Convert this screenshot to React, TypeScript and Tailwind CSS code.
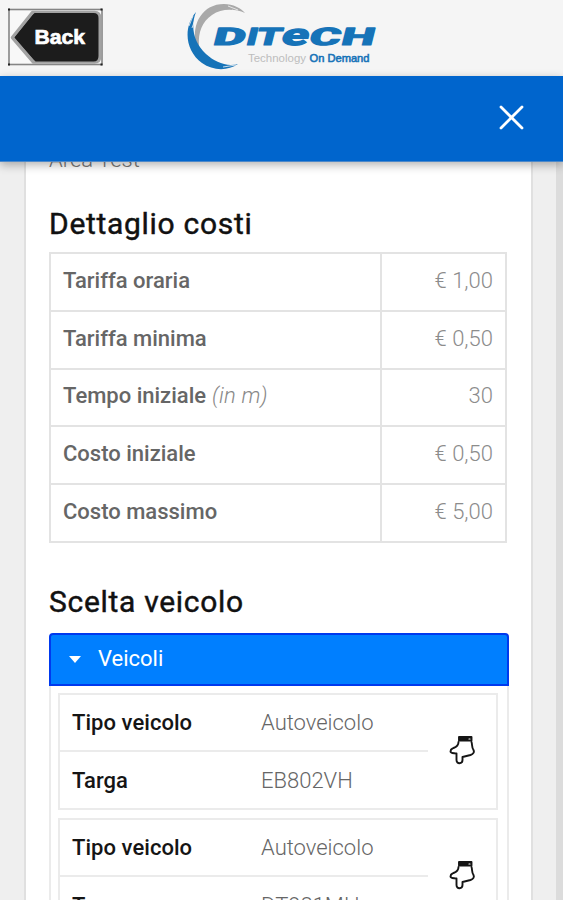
import type { ReactNode } from 'react';

interface Cost {
  label: string;
  note?: string;
  value: string;
}

interface Vehicle {
  type: string;
  plate: string;
}

const costs: Cost[] = [
  { label: 'Tariffa oraria', value: '€ 1,00' },
  { label: 'Tariffa minima', value: '€ 0,50' },
  { label: 'Tempo iniziale', note: '(in m)', value: '30' },
  { label: 'Costo iniziale', value: '€ 0,50' },
  { label: 'Costo massimo', value: '€ 5,00' },
];

const vehicles: Vehicle[] = [
  { type: 'Autoveicolo', plate: 'EB802VH' },
  { type: 'Autoveicolo', plate: 'DT981MH' },
];

// x offset and width of each letter in the wordmark
const wordmark = [
  { letter: 'D', x: 28, width: 32 },
  { letter: 'I', x: 61, width: 11 },
  { letter: 'T', x: 71, width: 25 },
  { letter: 'e', x: 96, width: 27 },
  { letter: 'C', x: 124, width: 31 },
  { letter: 'H', x: 156, width: 33 },
];

function BackButton() {
  return (
    <button aria-label="Back" className="h-[58px] w-[97px]">
      <svg width="97" height="58" viewBox="0 0 96 58">
        <rect x="1.5" y="1.5" width="93" height="55" fill="#f8f8f8" stroke="#858585" strokeWidth="1.6" />
        <path d="M25 4.5H87Q92 4.5 92 9.5V49Q92 54 87 54H26L5 29.5Z" fill="#1c1c1c" stroke="#a2a2a2" strokeWidth="3.5" strokeLinejoin="round" />
        <path d="M27 5H86Q91 5 91 10V48Q91 53.5 86 53.5H28L7 29.5Z" fill="#1c1c1c" />
        <g fill="#222">
          <rect x="0.5" y="0.5" width="2" height="2" />
          <rect x="93" y="0.5" width="2" height="2" />
          <rect x="0.5" y="55.5" width="2" height="2" />
          <rect x="93" y="55.5" width="2" height="2" />
        </g>
        <text x="27" y="36" fill="#fff" stroke="#fff" strokeWidth="0.7" fontFamily="Liberation Sans, sans-serif" fontWeight="700" fontSize="21" textLength="50.5" lengthAdjust="spacingAndGlyphs">
          Back
        </text>
      </svg>
    </button>
  );
}

function Logo() {
  return (
    <svg width="200" height="72" viewBox="0 0 200 72" role="img" aria-label="Ditech">
      <path d="M12 46C7 23 19 4 40 4C49 4 57 8 61 13C51 9 38 8 28 15C18 22 14 32 15 46Z" fill="#a9a9a9" />
      <path d="M12 12C-1 27 1 51 18 63C29 71 44 71 54 64C42 67 31 62 22 54C10 43 6 27 12 12Z" fill="#1673b8" />
      <path d="M9 16L5 26M12 17L8 28M44 6L54 10M48 10L58 13M39 67L52 65" stroke="#f5f5f5" strokeWidth="0.8" />
      <g fill="#1673b8" stroke="#1673b8" strokeWidth="1.2" strokeLinejoin="round" fontFamily="Roboto, sans-serif" fontWeight="800">
        {wordmark.map(({ letter, x, width }) => (
          <text
            key={letter}
            transform={`translate(${x} 45.3) skewX(-14)`}
            fontSize={letter === 'e' ? 30 : 24}
            textLength={width}
            lengthAdjust="spacingAndGlyphs"
          >
            {letter}
          </text>
        ))}
      </g>
      <text x="64" y="61.5" fill="#bdbdbd" fontFamily="Liberation Sans, sans-serif" fontSize="11.5" textLength="58" lengthAdjust="spacingAndGlyphs">
        Technology
      </text>
      <text x="125.5" y="61.5" fill="#1673b8" stroke="#1673b8" strokeWidth="0.6" fontFamily="Liberation Sans, sans-serif" fontSize="11.5" textLength="60" lengthAdjust="spacingAndGlyphs">
        On Demand
      </text>
    </svg>
  );
}

function HandIcon() {
  return (
    <svg width="28" height="32" viewBox="0.5 1 28 32" fill="none" stroke="#151515" strokeWidth="1.9" strokeLinejoin="round" strokeLinecap="round">
      <path d="M11 8C11 11 9 13 6 14C4 15 3 15 3 17.5C3 19.5 6 19 9 19.5V26C9 30.5 15 30 15 26V23L23 21C26 20 27 18 26 16C24 13 25 11 24 8" />
      <path d="M11.5 3H24V6.5H11.5Z" fill="#151515" />
      <path d="M21.5 5H22.5" stroke="#fff" strokeWidth="1.2" />
    </svg>
  );
}

function Heading({ children }: { children: ReactNode }) {
  return (
    <h2 className="h-[40px] text-[30px] leading-[40px] tracking-[0.7px] text-[#111] [-webkit-text-stroke:0.45px_#111]">
      {children}
    </h2>
  );
}

function VehicleCard({ vehicle }: { vehicle: Vehicle }) {
  return (
    <div className="flex h-[117px] w-[440px] shrink-0 border-2 border-[#ebebeb]">
      <dl className="w-[368px] text-[22px] leading-[56px]">
        <div className="flex h-[57px] border-b-2 border-[#ebebeb] pl-3">
          <dt className="w-[189px] font-medium tracking-[0.05px] text-[#151515]">Tipo veicolo</dt>
          <dd className="font-light text-[#666]">{vehicle.type}</dd>
        </div>
        <div className="flex h-[56px] pl-3 leading-[58px]">
          <dt className="w-[189px] font-medium tracking-[0.05px] text-[#151515]">Targa</dt>
          <dd className="font-light text-[#666]">{vehicle.plate}</dd>
        </div>
      </dl>
      <button aria-label="Seleziona" className="flex flex-1 items-center justify-center">
        <HandIcon />
      </button>
    </div>
  );
}

export default function App() {
  return (
    <div className="flex h-[900px] w-[563px] flex-col overflow-hidden bg-[#efefef] font-['Roboto',sans-serif]">
      <header className="flex h-[76px] shrink-0 bg-[#f5f5f5] pl-[7px] pt-2">
        <BackButton />
        <div className="-mt-2 ml-20">
          <Logo />
        </div>
      </header>

      <div className="z-10 flex h-[86px] shrink-0 items-center justify-end border-b border-[#4c88c9] bg-[#0065cd] pb-0.5 pr-[39px] shadow-[0_3px_9px_rgba(0,0,0,0.3)]">
        <button aria-label="Chiudi">
          <svg width="25" height="25" viewBox="0 0 25 25" stroke="#fff" strokeWidth="2.8" strokeLinecap="round">
            <path d="M2 2L23 23M23 2L2 23" />
          </svg>
        </button>
      </div>

      <div className="flex min-h-0 flex-1 justify-between">
        <main className="ml-6 w-[509px] overflow-hidden border-x-2 border-[#e0e0e0] bg-white pl-[23px]">
          <p className="-mt-4 h-[58px] text-[22px] font-light leading-[28px] text-[#777]">Area Test</p>

          <Heading>Dettaglio costi</Heading>
          <table className="mt-[8px] w-[458px] table-fixed border-collapse text-[22px] leading-[28px]">
            <tbody>
              {costs.map((cost) => (
                <tr key={cost.label} className="h-[57.8px]">
                  <th className="w-[331px] border-2 border-[#e3e3e3] pb-0.5 pl-3 pt-0 text-left font-medium text-[#666]">
                    {cost.label}
                    {cost.note && <em className="ml-1.5 font-light tracking-[0.2px] text-[#888]">{cost.note}</em>}
                  </th>
                  <td className="border-2 border-[#e3e3e3] pb-0.5 pr-3 pt-0 text-right font-light text-[#8c8c8c]">{cost.value}</td>
                </tr>
              ))}
            </tbody>
          </table>

          <div className="mt-[39px]">
            <Heading>Scelta veicolo</Heading>
          </div>
          <section className="mt-[11px] w-[460px]">
            <button className="flex h-[53px] w-full items-center rounded-t-[4px] border-2 border-[#0039ee] bg-[#007fff] pl-[18px] text-[22px] text-white">
              <svg width="12" height="7" viewBox="0 0 12 7" fill="#fff">
                <path d="M0 0H12L6 7Z" />
              </svg>
              <span className="-mt-0.5 ml-[17px]">Veicoli</span>
            </button>
            <div className="flex h-[240px] flex-col gap-2 border-x-2 border-[#ebebeb] pl-[7px] pt-[7px]">
              {vehicles.map((vehicle) => (
                <VehicleCard key={vehicle.plate} vehicle={vehicle} />
              ))}
            </div>
          </section>
        </main>
        <div className="w-[7px] bg-[#dcdcdc]" />
      </div>
    </div>
  );
}
